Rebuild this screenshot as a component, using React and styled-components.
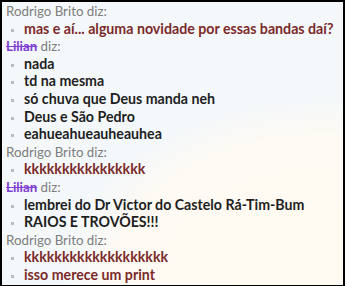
import React from "react";
import styled, { createGlobalStyle } from "styled-components";

const GlobalStyles = createGlobalStyle`
  html, body {
    margin: 0;
    padding: 0;
    background: #000;
  }
`;

const chat = [
  {
    who: "Rodrigo Brito",
    lilian: false,
    lines: ["mas e aí... alguma novidade por essas bandas daí?"],
  },
  {
    who: "Lilian",
    lilian: true,
    lines: [
      "nada",
      "td na mesma",
      "só chuva que Deus manda neh",
      "Deus e São Pedro",
      "eahueahueauheauhea",
    ],
  },
  { who: "Rodrigo Brito", lilian: false, lines: ["kkkkkkkkkkkkkkkk"] },
  {
    who: "Lilian",
    lilian: true,
    lines: ["lembrei do Dr Victor do Castelo Rá-Tim-Bum", "RAIOS E TROVÕES!!!"],
  },
  {
    who: "Rodrigo Brito",
    lilian: false,
    lines: ["kkkkkkkkkkkkkkkkkkk", "isso merece um print"],
  },
];

const App = () => {
  return (
    <Frame>
      <GlobalStyles />
      <Window>
        {chat.map((block, i) => (
          <Block key={i}>
            <Header>
              {block.lilian ? (
                <>
                  <Nick>Lilian</Nick> diz:
                </>
              ) : (
                `${block.who} diz:`
              )}
            </Header>
            {block.lines.map((line, j) => (
              <Message key={j} mine={!block.lilian}>
                {line}
              </Message>
            ))}
          </Block>
        ))}
      </Window>
    </Frame>
  );
};

const Frame = styled.div`
  width: 345px;
  height: 286px;
  box-sizing: border-box;
  padding: 2px 2px 1px 2px;
  background: #000;
`;

const Window = styled.div`
  height: 100%;
  box-sizing: border-box;
  padding: 1px 0 0 4px;
  background: radial-gradient(
      ellipse 380px 250px at 330px 275px,
      #fffbf2 0%,
      #fffaf3 55%,
      rgba(255, 250, 243, 0) 72%
    ),
    #f4f8fb;
  font-family: Lato, "Liberation Sans", sans-serif;
  font-size: 13.3px;
  line-height: 17.6px;
`;

const Block = styled.div`
  display: flex;
  flex-direction: column;
`;

const Header = styled.div`
  height: 17.6px;
  color: #7d7d7d;
  white-space: nowrap;
`;

const Nick = styled.span`
  color: #7f3fd0;
  font-weight: 700;
  text-decoration: line-through;
`;

const Message = styled.div`
  position: relative;
  height: 17.6px;
  padding-left: 18px;
  white-space: nowrap;
  font-size: 14.2px;
  line-height: 16.8px;
  font-weight: 700;
  color: ${(p) => (p.mine ? "#7b2a2a" : "#1e1e1e")};

  &::before {
    content: "";
    position: absolute;
    left: 5px;
    top: 8px;
    width: 3px;
    height: 3px;
    background: #b8bcc0;
  }
`;

export default App;
